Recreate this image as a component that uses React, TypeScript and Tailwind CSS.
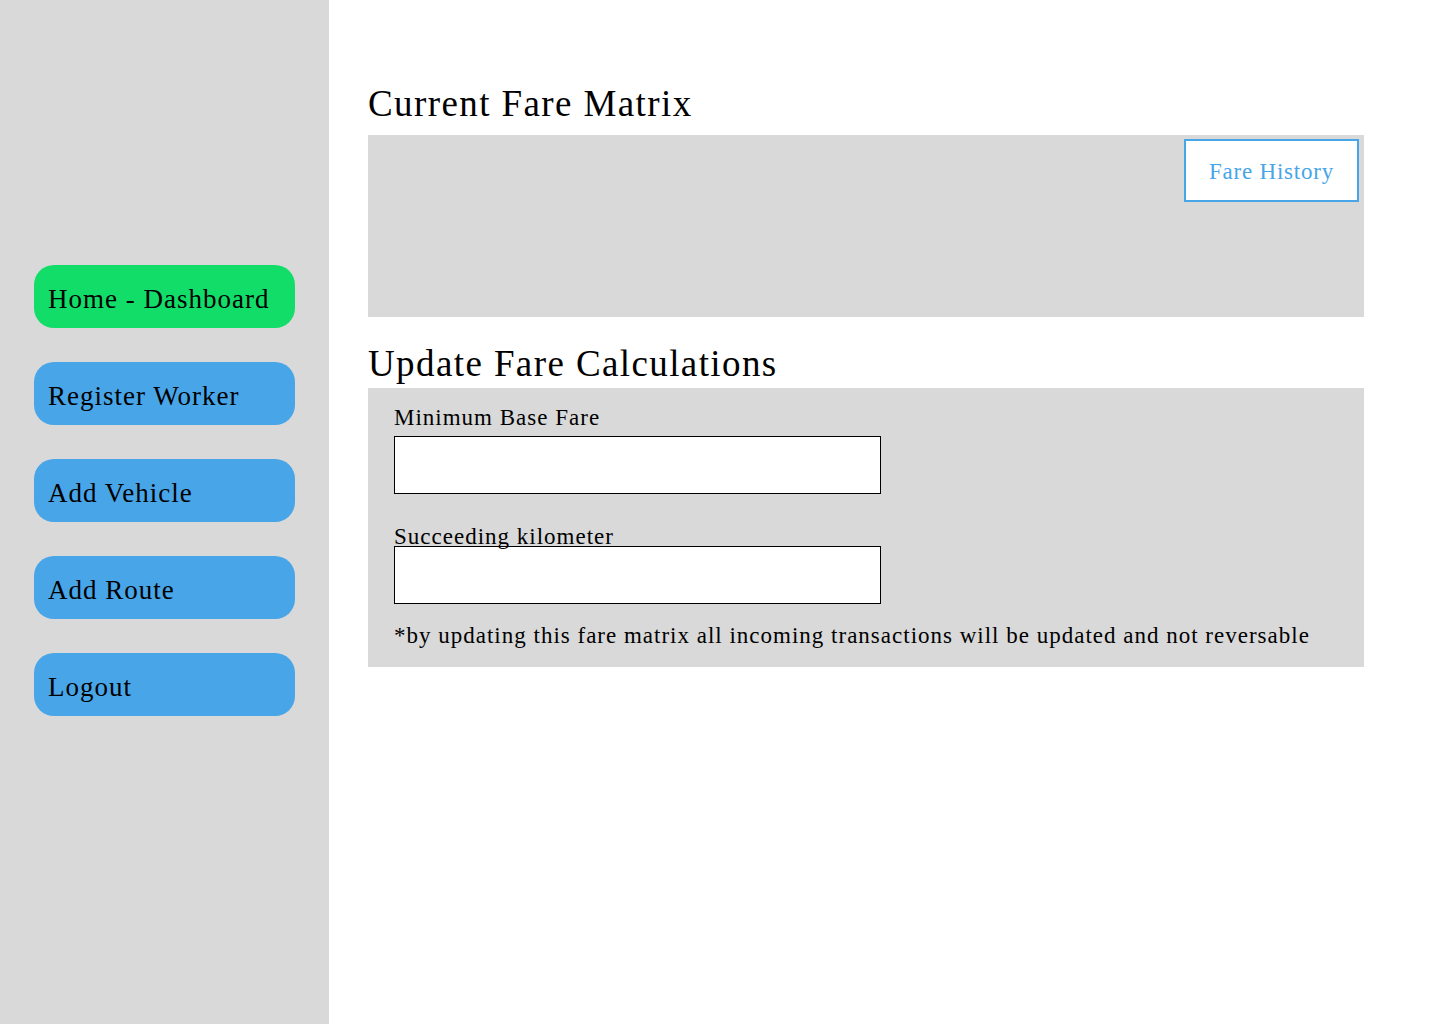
import React from "react";

const font = { fontFamily: '"Liberation Serif", "DejaVu Serif", serif' };

function NavButton({ label, green }: { label: string; green?: boolean }) {
  return (
    <div
      className={`w-[261px] h-[63px] rounded-[20px] flex items-center pl-[14px] pt-[6px] text-[27px] tracking-[1px] text-black ${
        green ? "bg-[#12dd69]" : "bg-[#47a5e8]"
      }`}
    >
      {label}
    </div>
  );
}

export default function App() {
  return (
    <div className="flex w-[1440px] h-[1024px] bg-white" style={font}>
      <aside className="w-[329px] h-full bg-[#d9d9d9] flex flex-col gap-[34px] pt-[265px] pl-[34px]">
        <NavButton label="Home - Dashboard" green />
        <NavButton label="Register Worker" />
        <NavButton label="Add Vehicle" />
        <NavButton label="Add Route" />
        <NavButton label="Logout" />
      </aside>
      <main className="flex-1 pl-[39px] pt-[80px]">
        <h1 className="text-[37px] tracking-[1.4px] leading-[46px] text-black h-[55px] pt-[1px]">Current Fare Matrix</h1>
        <section className="w-[996px] h-[182px] bg-[#d9d9d9] flex justify-end pt-[4px] pr-[5px]">
          <button className="w-[175px] h-[63px] border-2 border-[#47a5e8] bg-white text-[#47a5e8] text-[23px] tracking-[0.8px] pt-[4px]">
            Fare History
          </button>
        </section>
        <h2 className="text-[37px] tracking-[1.4px] leading-[46px] text-black h-[71px] pt-[24px]">Update Fare Calculations</h2>
        <section className="w-[996px] h-[279px] bg-[#d9d9d9] pl-[26px] pt-[16px]">
          <div className="text-[23px] tracking-[1px] leading-[28px] h-[32px]">Minimum Base Fare</div>
          <div className="w-[487px] h-[58px] border border-black bg-white" />
          <div className="relative z-10 text-[23px] tracking-[1px] leading-[28px] h-[28px] mt-[29px]">Succeeding kilometer</div>
          <div className="w-[487px] h-[58px] border border-black bg-white -mt-[5px]" />
          <div className="text-[23px] tracking-[1px] leading-[28px] pt-[18px]">
            *by updating this fare matrix all incoming transactions will be updated and not reversable
          </div>
        </section>
      </main>
    </div>
  );
}
